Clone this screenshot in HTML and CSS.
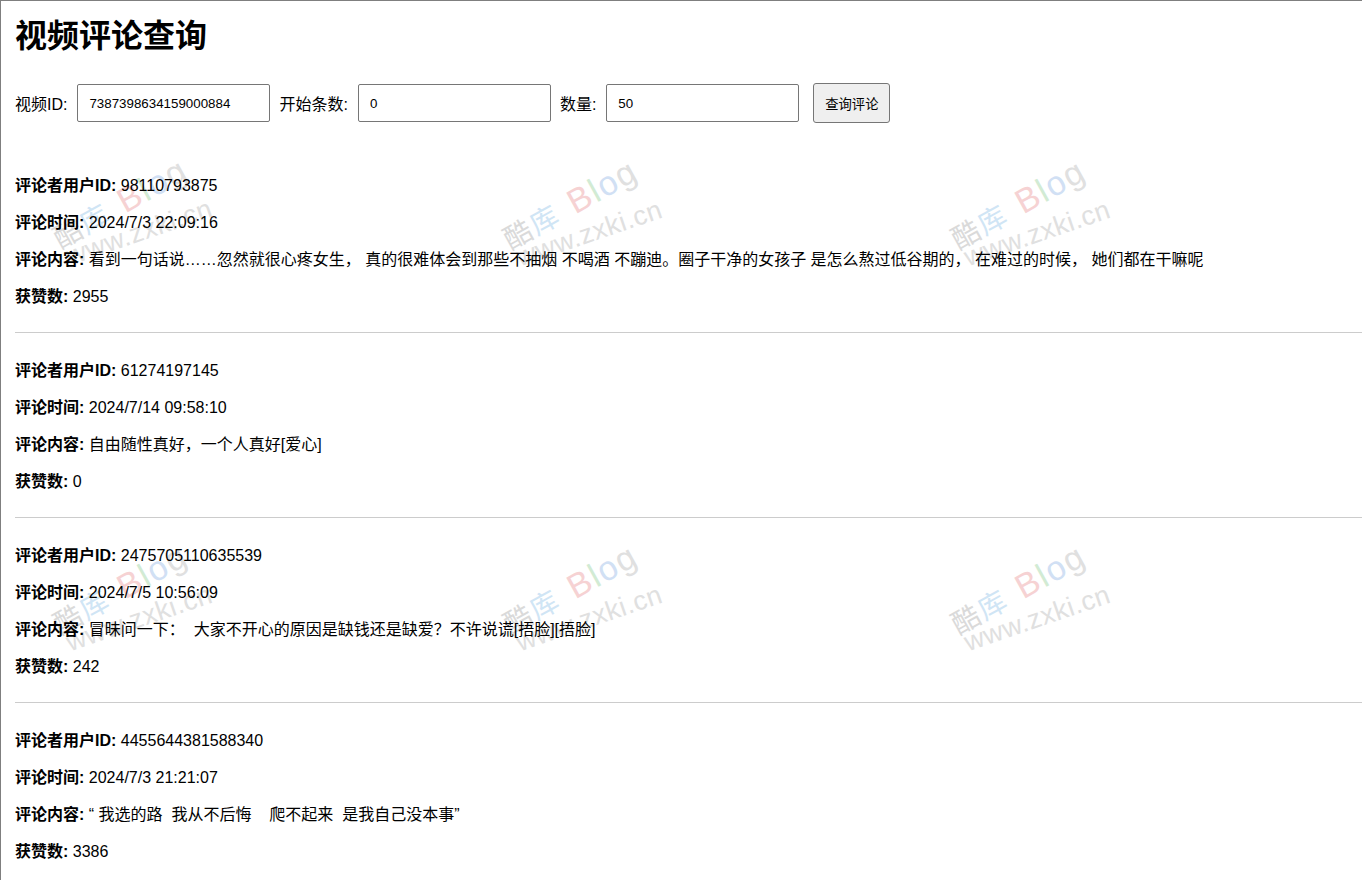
FILE: index.html
```html
<!DOCTYPE html>
<html lang="zh-CN">
<head>
<meta charset="UTF-8">
<meta name="viewport" content="width=device-width, initial-scale=1.0">
<title>视频评论查询</title>
<link rel="stylesheet" href="styles.css">
</head>
<body>

<div class="watermarks">
  <div class="wm wm-1"><div class="wm-top"><span class="c1">酷</span><span class="c2">库</span><span class="b">B</span><span class="l">l</span><span class="o">o</span><span class="g">g</span></div><div class="wm-url">www.zxki.cn</div></div>
  <div class="wm wm-2"><div class="wm-top"><span class="c1">酷</span><span class="c2">库</span><span class="b">B</span><span class="l">l</span><span class="o">o</span><span class="g">g</span></div><div class="wm-url">www.zxki.cn</div></div>
  <div class="wm wm-3"><div class="wm-top"><span class="c1">酷</span><span class="c2">库</span><span class="b">B</span><span class="l">l</span><span class="o">o</span><span class="g">g</span></div><div class="wm-url">www.zxki.cn</div></div>
  <div class="wm wm-4"><div class="wm-top"><span class="c1">酷</span><span class="c2">库</span><span class="b">B</span><span class="l">l</span><span class="o">o</span><span class="g">g</span></div><div class="wm-url">www.zxki.cn</div></div>
  <div class="wm wm-5"><div class="wm-top"><span class="c1">酷</span><span class="c2">库</span><span class="b">B</span><span class="l">l</span><span class="o">o</span><span class="g">g</span></div><div class="wm-url">www.zxki.cn</div></div>
  <div class="wm wm-6"><div class="wm-top"><span class="c1">酷</span><span class="c2">库</span><span class="b">B</span><span class="l">l</span><span class="o">o</span><span class="g">g</span></div><div class="wm-url">www.zxki.cn</div></div>
</div>

<div class="page">
  <h1>视频评论查询</h1>

  <form class="query" onsubmit="return false">
    <label for="videoId">视频ID:</label>
    <input type="text" id="videoId" class="field" value="7387398634159000884">
    <label for="cursor">开始条数:</label>
    <input type="text" id="cursor" class="field" value="0">
    <label for="count">数量:</label>
    <input type="text" id="count" class="field" value="50">
    <button type="submit" class="btn">查询评论</button>
  </form>

  <div id="comments">
    <div class="comment">
      <p><strong>评论者用户ID:</strong> 98110793875</p>
      <p><strong>评论时间:</strong> 2024/7/3 22:09:16</p>
      <p><strong>评论内容:</strong> 看到一句话说……忽然就很心疼女生， 真的很难体会到那些不抽烟 不喝酒 不蹦迪。圈子干净的女孩子 是怎么熬过低谷期的， 在难过的时候， 她们都在干嘛呢</p>
      <p><strong>获赞数:</strong> 2955</p>
    </div>
    <div class="comment">
      <p><strong>评论者用户ID:</strong> 61274197145</p>
      <p><strong>评论时间:</strong> 2024/7/14 09:58:10</p>
      <p><strong>评论内容:</strong> 自由随性真好，一个人真好[爱心]</p>
      <p><strong>获赞数:</strong> 0</p>
    </div>
    <div class="comment">
      <p><strong>评论者用户ID:</strong> 2475705110635539</p>
      <p><strong>评论时间:</strong> 2024/7/5 10:56:09</p>
      <p><strong>评论内容:</strong> 冒昧问一下：&nbsp; 大家不开心的原因是缺钱还是缺爱？不许说谎[捂脸][捂脸]</p>
      <p><strong>获赞数:</strong> 242</p>
    </div>
    <div class="comment">
      <p><strong>评论者用户ID:</strong> 4455644381588340</p>
      <p><strong>评论时间:</strong> 2024/7/3 21:21:07</p>
      <p><strong>评论内容:</strong> “ 我选的路&nbsp; 我从不后悔&nbsp; &nbsp; 爬不起来&nbsp; 是我自己没本事”</p>
      <p><strong>获赞数:</strong> 3386</p>
    </div>
  </div>
</div>

</body>
</html>
```

FILE: styles.css
```css
* {
  box-sizing: border-box;
}
html {
  background: #ffffff;
}
body {
  position: relative;
  margin: 0;
  padding: 0 0 0 14px;
  min-height: 100vh;
  border-top: 1px solid #7f7f7f;
  border-left: 1px solid #7f7f7f;
  font-family: "Liberation Sans", Arial, "Noto Sans CJK SC", sans-serif;
  font-size: 16px;
  color: #000000;
}

/* watermark layer, each .wm sits on the centre of its first glyph */
.watermarks {
  position: absolute;
  top: 0;
  left: 0;
  right: 0;
  bottom: 0;
  overflow: hidden;
  pointer-events: none;
}
.wm {
  position: absolute;
  width: 0;
  height: 0;
  white-space: nowrap;
}
.wm-top {
  position: absolute;
  left: -14px;
  top: -17px;
  font-size: 28px;
  line-height: 34px;
  letter-spacing: 2px;
  transform-origin: 14px 17px;
  transform: rotate(-29deg);
}
.wm-top .b,
.wm-top .l,
.wm-top .o,
.wm-top .g {
  font-size: 34px;
  letter-spacing: 1.5px;
}
.wm-top .b {
  margin-left: 14px;
}
.wm-url {
  position: absolute;
  left: 0;
  top: 12px;
  font-size: 27px;
  line-height: 26px;
  letter-spacing: 0.5px;
  color: #e0e0e0;
  transform-origin: 0 50%;
  transform: rotate(-19deg);
}
.c1 { color: #dadada; }
.c2 { color: #d0e5f5; }
.b { color: #f6d2d3; }
.l { color: #d2ebd4; }
.o { color: #d1e0f4; }
.g { color: #e0e0e0; }

.wm-1 { left: 66px; top: 231px; }
.wm-2 { left: 516px; top: 232px; }
.wm-3 { left: 964px; top: 232px; }
.wm-4 { left: 66px; top: 617px; }
.wm-5 { left: 516px; top: 617px; }
.wm-6 { left: 964px; top: 617px; }

.page {
  position: relative;
  z-index: 1;
}
h1 {
  font-size: 32px;
  line-height: 37px;
  font-weight: bold;
  margin: 17px 0 0;
}
.query {
  display: flex;
  align-items: center;
  margin: 28px 0 25px;
}
.query label {
  font-size: 16px;
  margin-right: 10px;
}
.field {
  width: 193px;
  height: 38px;
  padding: 0 11px;
  margin-right: 9px;
  border: 1px solid #767676;
  border-radius: 2px;
  font-family: "Liberation Sans", Arial, sans-serif;
  font-size: 13.33px;
  color: #000000;
  background: #ffffff;
}
.btn {
  height: 40px;
  width: 77px;
  margin-left: 5px;
  padding: 0;
  border: 1px solid #767676;
  border-radius: 3px;
  background-color: #efefef;
  font-family: "Liberation Sans", Arial, "Noto Sans CJK SC", sans-serif;
  font-size: 13.33px;
  color: #000000;
  cursor: pointer;
}
.btn:hover {
  background-color: #e5e5e5;
}
.comment {
  padding: 11px 0 9px;
  border-bottom: 1px solid #cccccc;
}
.comment p {
  margin: 16px 0;
  line-height: 21px;
}
```
